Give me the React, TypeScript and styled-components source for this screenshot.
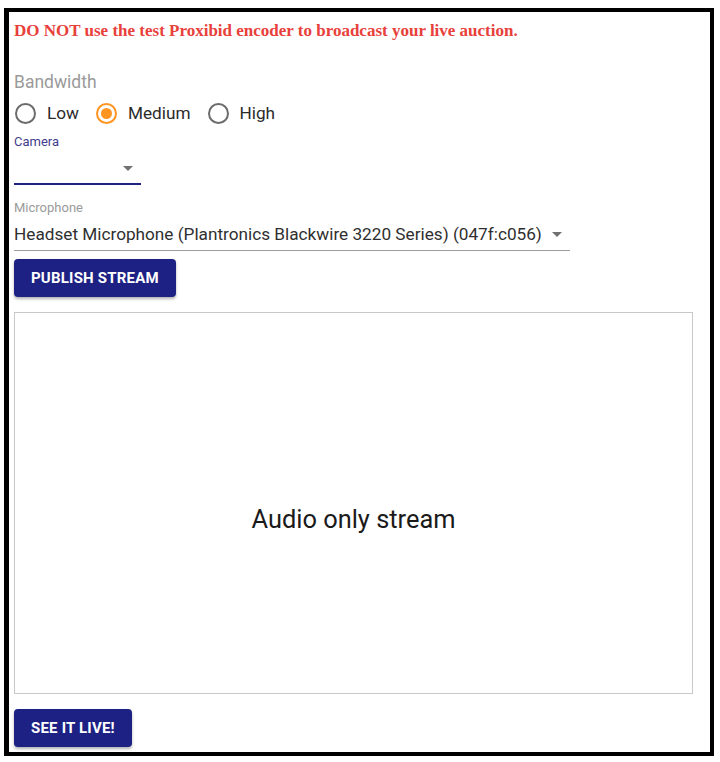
import styled, { createGlobalStyle } from "styled-components";

const GlobalStyle = createGlobalStyle`
    html, body {
        margin: 0;
        padding: 0;
        background: #fff;
    }
    body {
        font-family: Roboto, "Liberation Sans", Arial, sans-serif;
    }
`;

function Radio({ label, checked }: { label: string; checked?: boolean }) {
    return (
        <RadioItemSld>
            <RadioCircleSld checked={checked} />
            <RadioLabelSld>{label}</RadioLabelSld>
        </RadioItemSld>
    );
}

function App() {
    return (
        <>
            <GlobalStyle />
            <FrameSld>
                <WarningSld>DO NOT use the test Proxibid encoder to broadcast your live auction.</WarningSld>
                <GroupLabelSld>Bandwidth</GroupLabelSld>
                <RadioRowSld>
                    <Radio label="Low" />
                    <Radio label="Medium" checked />
                    <Radio label="High" />
                </RadioRowSld>
                <FieldLabelSld focused>Camera</FieldLabelSld>
                <SelectSld width={127} focused>
                    <SelectValueSld></SelectValueSld>
                    <ArrowSld />
                </SelectSld>
                <FieldLabelSld style={{ marginTop: 16 }}>Microphone</FieldLabelSld>
                <SelectSld width={556}>
                    <SelectValueSld>Headset Microphone (Plantronics Blackwire 3220 Series) (047f:c056)</SelectValueSld>
                    <ArrowSld />
                </SelectSld>
                <ButtonSld style={{ marginTop: 8 }}>Publish Stream</ButtonSld>
                <VideoBoxSld>Audio only stream</VideoBoxSld>
                <ButtonSld style={{ marginTop: 15 }}>See it live!</ButtonSld>
            </FrameSld>
        </>
    );
}

const FrameSld = styled.div`
    box-sizing: border-box;
    margin: 8px 0 0 4px;
    width: 710px;
    height: 748px;
    border: 4px solid #000;
    border-left-width: 5px;
    padding: 10px 0 0 5px;
    display: flex;
    flex-direction: column;
    align-items: flex-start;
`;

const WarningSld = styled.div`
    font-family: "Liberation Serif", "Times New Roman", serif;
    font-weight: bold;
    font-size: 17px;
    line-height: 18px;
    color: #e8403b;
`;

const GroupLabelSld = styled.div`
    margin-top: 32px;
    font-size: 17.5px;
    line-height: 20px;
    color: #9a9a9a;
`;

const RadioRowSld = styled.div`
    margin-top: 9px;
    display: flex;
    align-items: center;
    height: 24px;
    gap: 16px;
`;

const RadioItemSld = styled.label`
    display: flex;
    align-items: center;
    gap: 11px;
`;

const RadioCircleSld = styled.span<{ checked?: boolean }>`
    box-sizing: border-box;
    width: 21px;
    height: 21px;
    margin-left: 1px;
    border-radius: 50%;
    border: 2px solid ${props => props.checked ? "#ff9420" : "#6b6b6b"};
    display: flex;
    align-items: center;
    justify-content: center;
    &::after {
        content: "";
        display: ${props => props.checked ? "block" : "none"};
        width: 11px;
        height: 11px;
        border-radius: 50%;
        background: #ff9420;
    }
`;

const RadioLabelSld = styled.span`
    font-size: 17.2px;
    color: #2b2b2b;
`;

const FieldLabelSld = styled.div<{ focused?: boolean }>`
    margin-top: 10px;
    font-size: 13px;
    line-height: 14px;
    color: ${props => props.focused ? "#3f3c8c" : "#9a9a9a"};
`;

const SelectSld = styled.div<{ width: number; focused?: boolean }>`
    box-sizing: border-box;
    width: ${props => props.width}px;
    height: 36px;
    border-bottom: ${props => props.focused ? "2px solid #1f237f" : "1px solid #9e9e9e"};
    display: flex;
    align-items: center;
    padding-top: ${props => props.focused ? 4 : 3}px;
    padding-right: 8px;
`;

const SelectValueSld = styled.span`
    flex: 1;
    font-size: 17.2px;
    color: #2f2f2f;
    white-space: nowrap;
`;

const ArrowSld = styled.span`
    width: 0;
    height: 0;
    border-left: 5px solid transparent;
    border-right: 5px solid transparent;
    border-top: 5px solid #707070;
`;

const ButtonSld = styled.button`
    height: 38px;
    padding: 0 17px;
    border: none;
    border-radius: 4px;
    background: #1d2183;
    color: #fff;
    font-family: Roboto, "Liberation Sans", Arial, sans-serif;
    font-weight: bold;
    font-size: 15px;
    letter-spacing: 0.2px;
    text-transform: uppercase;
    box-shadow: 0 2px 3px rgba(0, 0, 0, 0.3);
`;

const VideoBoxSld = styled.div`
    box-sizing: border-box;
    margin-top: 15px;
    width: 679px;
    height: 382px;
    border: 1px solid #c8c8c8;
    display: flex;
    align-items: center;
    justify-content: center;
    padding-top: 32px;
    font-size: 25.4px;
    color: #1a1a1a;
`;

export default App;
